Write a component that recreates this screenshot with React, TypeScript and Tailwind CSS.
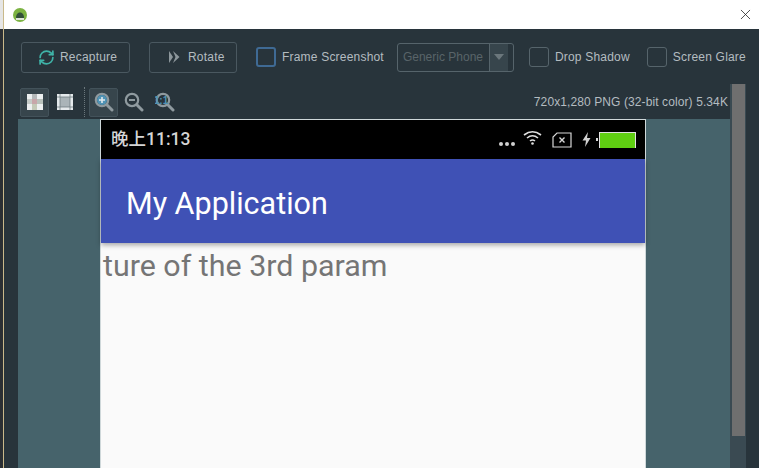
import { RefreshCw, X } from "lucide-react"

const uiFont = "font-['Liberation_Sans',Arial,sans-serif]"

function CheckBox({ active, label }: { active?: boolean; label: string }) {
  return (
    <div className="flex items-center">
      <div
        className={
          active
            ? "w-[20px] h-[20px] rounded-[3px] border-2 border-[#3f6a94]"
            : "w-[20px] h-[20px] rounded-[3px] border border-[#56646b]"
        }
      />
      <span className="ml-[6px] text-[12px] tracking-[0.2px] text-[#b4bcc0]">{label}</span>
    </div>
  )
}

function Lens({ children, color = "#8f9a9f" }: { children?: React.ReactNode; color?: string }) {
  return (
    <svg width="20" height="20" viewBox="0 0 20 20">
      <circle cx="8" cy="8" r="6.2" fill="none" stroke={color} strokeWidth="2.2" />
      <path d="M12.8 12.8 L18 18" stroke="#8f9a9f" strokeWidth="3" strokeLinecap="round" />
      {children}
    </svg>
  )
}

export default function App() {
  return (
    <div className={`w-[759px] h-[468px] overflow-hidden flex bg-[#28343b] ${uiFont}`}>
      {/* sliver of the window behind */}
      <div className="w-[4px] flex flex-col border-r border-[#c9b98a]">
        <div className="h-[29px] bg-[#e6e6e6]" />
        <div className="flex-1 bg-[#2b2f33]" />
      </div>

      <div className="flex-1 flex flex-col min-w-0">
        <div className="h-[29px] bg-white flex items-center justify-between pl-[9px] pr-[5px] shrink-0">
          <svg width="14" height="14" viewBox="0 0 14 14">
            <circle cx="7" cy="7" r="7" fill="#7cb342" />
            <path d="M3 10 C3 6 5 4.5 7 4.5 C9 4.5 11 6 11 10 Z" fill="#33513a" />
            <rect x="3" y="10" width="8" height="2" fill="#dfe6d8" />
          </svg>
          <X size={17} strokeWidth={1.1} className="text-[#222]" />
        </div>

        {/* top toolbar */}
        <div className="h-[55px] shrink-0 flex items-center pl-[17px] pt-[1px]">
          <button className="w-[109px] h-[31px] rounded-[3px] border border-[#4a5860] flex items-center pl-[16px]">
            <RefreshCw size={17} strokeWidth={2.4} className="text-[#3fb3a8]" />
            <span className="ml-[5px] text-[12px] tracking-[0.2px] text-[#b4bcc0]">Recapture</span>
          </button>
          <button className="ml-[19px] w-[88px] h-[31px] rounded-[3px] border border-[#4a5860] flex items-center pl-[19px]">
            <svg width="11" height="12" viewBox="0 0 11 12">
              <path d="M0 0 L4 6 L0 12 Z" fill="#8d979c" />
              <path d="M4 0 L10.5 6 L4 12 L6.5 6 Z" fill="#8d979c" />
            </svg>
            <span className="ml-[8px] text-[12px] tracking-[0.2px] text-[#b4bcc0]">Rotate</span>
          </button>
          <div className="ml-[19px]">
            <CheckBox active label="Frame Screenshot" />
          </div>
          <div className="ml-[13px] w-[117px] h-[29px] rounded-[3px] border border-[#56646b] flex items-center overflow-hidden">
            <span className="pl-[5px] w-[91px] whitespace-nowrap text-[12px] text-[#596469]">Generic Phone</span>
            <div className="w-[19px] h-[27px] border-l border-[#56646b] bg-[#37454c] flex items-center justify-center">
              <div className="w-0 h-0 border-x-[5px] border-x-transparent border-t-[6px] border-t-[#6b777c]" />
            </div>
          </div>
          <div className="ml-[15px]">
            <CheckBox label="Drop Shadow" />
          </div>
          <div className="ml-[17px]">
            <CheckBox label="Screen Glare" />
          </div>
        </div>

        <div className="flex-1 flex min-h-0">
          <div className="w-[726px] flex flex-col min-h-0">
            {/* second toolbar */}
            <div className="h-[35px] shrink-0 flex items-center pl-[16px] pt-[1px]">
              <div className="w-[29px] h-[29px] rounded-[2px] bg-[#37454c] border border-[#43525a] flex items-center justify-center">
                <svg width="16" height="16" viewBox="0 0 16 16">
                  <rect width="16" height="16" fill="#eceff0" />
                  <rect x="5" y="0" width="5" height="5" fill="#b5b9ba" />
                  <rect x="0" y="5" width="5" height="5" fill="#c5cbc8" />
                  <rect x="5" y="5" width="5" height="5" fill="#c8a6aa" />
                  <rect x="10" y="5" width="6" height="5" fill="#b9c2bc" />
                  <rect x="5" y="10" width="5" height="6" fill="#c4c9b8" />
                </svg>
              </div>
              <svg className="ml-[8px]" width="16" height="16" viewBox="0 0 16 16">
                <rect width="16" height="16" fill="#e4e9eb" />
                <rect x="3" y="3" width="10" height="10" fill="#aab4b8" />
                <path d="M3 0 V16 M13 0 V16 M0 3 H16 M0 13 H16" stroke="#6f7c82" strokeWidth="0.8" />
              </svg>
              <div className="ml-[11px] h-[30px] border-l border-dotted border-[#6b777c]" />
              <div className="ml-[4px] w-[29px] h-[29px] rounded-[2px] bg-[#37454c] border border-[#43525a] flex items-center justify-center">
                <Lens>
                  <circle cx="8" cy="8" r="5" fill="#4f93b5" />
                  <path d="M5 8 H11 M8 5 V11" stroke="#dfe9ee" strokeWidth="1.6" />
                </Lens>
              </div>
              <div className="ml-[6px]">
                <Lens>
                  <path d="M5 8 H11" stroke="#8f9a9f" strokeWidth="2" />
                </Lens>
              </div>
              <div className="ml-[11px]">
                <Lens>
                  <text x="6" y="11.5" textAnchor="middle" fontSize="10" fontWeight="700" fill="#4f93b5">
                    1:1
                  </text>
                </Lens>
              </div>
              <span className="ml-auto mr-[2px] text-[12px] tracking-[0.1px] text-[#b4bcc0] whitespace-nowrap">
                720x1,280 PNG (32-bit color) 5.34K
              </span>
            </div>

            {/* device canvas */}
            <div className="flex-1 min-h-0 ml-[14px] pl-[82px] bg-[#46636b] overflow-hidden">
              <div className="w-[546px] h-[400px] border border-[#cfd8da] bg-[#fafafa] flex flex-col">
                <div className="h-[39px] shrink-0 bg-black flex items-center pl-[10px] pr-[9px]">
                  <span className="text-[17.5px] font-medium text-[#d5d5d5] font-['Roboto','Noto_Sans_CJK_SC',sans-serif]">
                    晚上11:13
                  </span>
                  <div className="ml-auto flex gap-[2px] mt-[9px]">
                    <div className="w-[4px] h-[4px] rounded-full bg-[#d0d0d0]" />
                    <div className="w-[4px] h-[4px] rounded-full bg-[#d0d0d0]" />
                    <div className="w-[4px] h-[4px] rounded-full bg-[#d0d0d0]" />
                  </div>
                  <svg className="ml-[8px] mb-[5px]" width="19" height="15" viewBox="0 0 19 15" fill="none">
                    <path d="M1 5 Q9.5 -1.5 18 5" stroke="#e0e0e0" strokeWidth="1.6" />
                    <path d="M4 8 Q9.5 3.5 15 8" stroke="#e0e0e0" strokeWidth="1.6" />
                    <path d="M7 11 Q9.5 9 12 11" stroke="#e0e0e0" strokeWidth="1.6" />
                    <circle cx="9.5" cy="13.5" r="1.3" fill="#e0e0e0" />
                  </svg>
                  <svg className="ml-[10px]" width="20" height="16" viewBox="0 0 20 16" fill="none">
                    <path d="M5 1 H19 V15 H1 V5 Z" stroke="#d8d8d8" strokeWidth="1.2" />
                    <path d="M7.5 5.5 L12.5 10.5 M12.5 5.5 L7.5 10.5" stroke="#d8d8d8" strokeWidth="1.4" />
                  </svg>
                  <svg className="ml-[10px]" width="9" height="15" viewBox="0 0 9 15">
                    <path d="M6 0 L0.5 8.5 H4 L3 15 L8.5 6 H5 Z" fill="#d0d0d0" />
                  </svg>
                  <div className="ml-[5px] w-[2px] h-[3px] bg-[#d8d8d8]" />
                  <div className="ml-[1px] w-[37px] h-[16px] border border-[#e0e0e0] border-b-0 bg-[#5fcf12]" />
                </div>
                <div className="h-[84px] shrink-0 bg-[#3f51b5] flex items-center pl-[25px] pt-[5px] shadow-[0_2px_5px_rgba(0,0,0,0.35)]">
                  <span className="text-[30.5px] text-white font-['Roboto',sans-serif]">My Application</span>
                </div>
                <div className="pl-[2px] pt-[3px] text-[30.4px] leading-[40px] text-[#757575] font-['Roboto',sans-serif]">
                  ture of the 3rd param
                </div>
              </div>
            </div>
          </div>

          {/* scrollbar */}
          <div className="w-[16px] bg-[#3a4a52] px-[2px]">
            <div className="w-[13px] h-[352px] bg-[#6f6f6f]" />
          </div>
        </div>
      </div>
    </div>
  )
}
